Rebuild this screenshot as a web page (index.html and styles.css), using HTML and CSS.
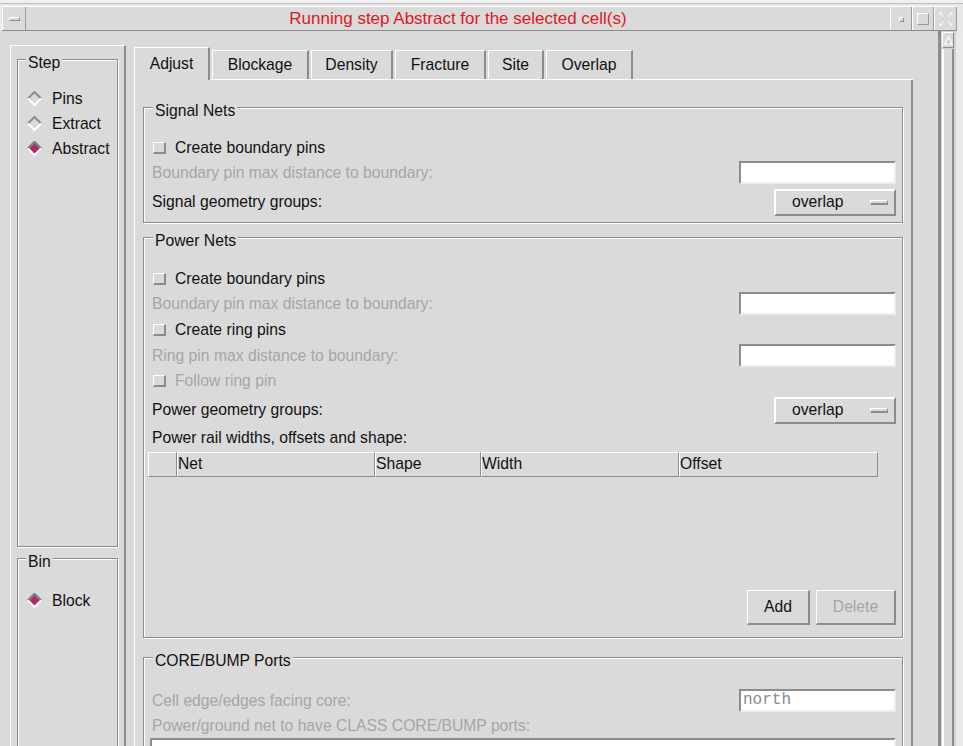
FILE: index.html
```html
<!DOCTYPE html>
<html>
<head>
<meta charset="utf-8">
<title>Abstract</title>
<link rel="stylesheet" href="styles.css">
</head>
<body>
<div class="window">
  <div class="topline"></div>
  <div class="titlebar">
    <div class="tb-btn tb-menu"><span class="menu-bar"></span></div>
    <div class="title">Running step Abstract for the selected cell(s)</div>
    <div class="tb-btn tb-min"><span class="min-dot"></span></div>
    <div class="tb-btn tb-max"><span class="max-box"></span></div>
    <div class="tb-btn tb-close">
      <svg width="14" height="14" viewBox="0 0 14 14">
        <g fill="none" stroke="#f6f6f6" stroke-width="1.4" stroke-dasharray="2 1">
          <path d="M1 1 L5 5 M13 1 L9 5 M1 13 L5 9 M13 13 L9 9"/>
          <path d="M1 1 H4 M1 1 V4 M13 1 H10 M13 1 V4 M1 13 H4 M1 13 V10 M13 13 H10 M13 13 V10"/>
        </g>
      </svg>
    </div>
  </div>
  <div class="client">
    <div class="scrollview">
      <div class="leftpanel">
        <div class="group step-group">
          <div class="group-title">Step</div>
          <div class="radio-list">
            <div class="radio-row">
              <svg class="radio" width="15" height="15" viewBox="0 0 15 15"><path d="M1 7.5 L7.5 1 L14 7.5" fill="none" stroke="#8a8a8a" stroke-width="2"/><path d="M1 7.5 L7.5 14 L14 7.5" fill="none" stroke="#ffffff" stroke-width="2"/></svg>
              <span>Pins</span>
            </div>
            <div class="radio-row">
              <svg class="radio" width="15" height="15" viewBox="0 0 15 15"><path d="M1 7.5 L7.5 1 L14 7.5" fill="none" stroke="#8a8a8a" stroke-width="2"/><path d="M1 7.5 L7.5 14 L14 7.5" fill="none" stroke="#ffffff" stroke-width="2"/></svg>
              <span>Extract</span>
            </div>
            <div class="radio-row">
              <svg class="radio" width="15" height="15" viewBox="0 0 15 15"><path d="M7.5 2 L13 7.5 L7.5 13 L2 7.5 Z" fill="#b02a68"/><path d="M1 7.5 L7.5 1 L14 7.5" fill="none" stroke="#7c7c7c" stroke-width="2.4"/><path d="M1 7.5 L7.5 14 L14 7.5" fill="none" stroke="#ffffff" stroke-width="2"/></svg>
              <span>Abstract</span>
            </div>
          </div>
        </div>
        <div class="group bin-group">
          <div class="group-title">Bin</div>
          <div class="radio-list bin-list">
            <div class="radio-row">
              <svg class="radio" width="15" height="15" viewBox="0 0 15 15"><path d="M7.5 2 L13 7.5 L7.5 13 L2 7.5 Z" fill="#b02a68"/><path d="M1 7.5 L7.5 1 L14 7.5" fill="none" stroke="#7c7c7c" stroke-width="2.4"/><path d="M1 7.5 L7.5 14 L14 7.5" fill="none" stroke="#ffffff" stroke-width="2"/></svg>
              <span>Block</span>
            </div>
          </div>
        </div>
      </div>

      <div class="tabs">
        <div class="tabrow">
          <div class="tab active w-adjust">Adjust</div>
          <div class="tab w-blockage">Blockage</div>
          <div class="tab w-density">Density</div>
          <div class="tab w-fracture">Fracture</div>
          <div class="tab w-site">Site</div>
          <div class="tab w-overlap">Overlap</div>
        </div>
        <div class="tabbody">
          <div class="group signal">
            <div class="group-title">Signal Nets</div>
            <div class="group-body">
              <div class="row first">
                <div class="check-label"><span class="checkbox"></span><span>Create boundary pins</span></div>
              </div>
              <div class="row">
                <span class="disabled">Boundary pin max distance to boundary:</span>
                <span class="input"></span>
              </div>
              <div class="row tall">
                <span>Signal geometry groups:</span>
                <span class="option"><span>overlap</span><span class="indicator"></span></span>
              </div>
            </div>
          </div>

          <div class="group power">
            <div class="group-title">Power Nets</div>
            <div class="group-body">
              <div class="row first">
                <div class="check-label"><span class="checkbox"></span><span>Create boundary pins</span></div>
              </div>
              <div class="row">
                <span class="disabled">Boundary pin max distance to boundary:</span>
                <span class="input"></span>
              </div>
              <div class="row gap1">
                <div class="check-label"><span class="checkbox"></span><span>Create ring pins</span></div>
              </div>
              <div class="row gap1">
                <span class="disabled">Ring pin max distance to boundary:</span>
                <span class="input"></span>
              </div>
              <div class="row">
                <div class="check-label disabled"><span class="checkbox"></span><span>Follow ring pin</span></div>
              </div>
              <div class="row tall">
                <span>Power geometry groups:</span>
                <span class="option"><span>overlap</span><span class="indicator"></span></span>
              </div>
              <div class="row gap1">
                <span>Power rail widths, offsets and shape:</span>
              </div>
              <div class="table-head">
                <div class="th"></div>
                <div class="th">Net</div>
                <div class="th">Shape</div>
                <div class="th">Width</div>
                <div class="th">Offset</div>
              </div>
              <div class="btn-row">
                <span class="btn w-add">Add</span>
                <span class="btn w-delete disabled">Delete</span>
              </div>
            </div>
          </div>

          <div class="group core">
            <div class="group-title">CORE/BUMP Ports</div>
            <div class="group-body">
              <div class="row first">
                <span class="disabled">Cell edge/edges facing core:</span>
                <span class="input mono">north</span>
              </div>
              <div class="row">
                <span class="disabled">Power/ground net to have CLASS CORE/BUMP ports:</span>
              </div>
              <div class="input wide"></div>
            </div>
          </div>
        </div>
      </div>
    </div>
    <div class="vscroll">
      <div class="sb-up">
        <svg width="9" height="9" viewBox="0 0 9 9"><path d="M4.5 1 L8 8 L1 8 Z" fill="#c9c9c9" stroke="#ffffff" stroke-width="1.2"/></svg>
      </div>
      <div class="sb-thumb"></div>
    </div>
    <div class="rightedge"></div>
  </div>
</div>
</body>
</html>
```
FILE: styles.css
```css
* { box-sizing: border-box; }
html, body { margin: 0; padding: 0; }
body {
  width: 963px;
  height: 746px;
  overflow: hidden;
  background: #e8e8e8;
  font-family: "Liberation Sans", Arial, sans-serif;
  font-size: 15.7px;
  color: #111;
}
.window { width: 963px; height: 746px; display: flex; flex-direction: column; }

.topline { height: 4px; background: #f0f0f0; border-bottom: 1px solid #bcbcbc; flex: none; }

.titlebar {
  flex: none;
  height: 25px;
  margin: 2px 6px 0 2px;
  display: flex;
  background: #dadada;
  border-top: 1px solid #fff;
  border-bottom: 1px solid #8c8c8c;
}
.tb-btn {
  flex: none;
  display: flex;
  align-items: center;
  justify-content: center;
  border-left: 1px solid #fff;
  border-right: 1px solid #9a9a9a;
}
.tb-menu { width: 24px; }
.menu-bar {
  width: 11px; height: 4px;
  border-top: 1px solid #fff; border-left: 1px solid #fff;
  border-right: 1px solid #8c8c8c; border-bottom: 1px solid #8c8c8c;
}
.title {
  flex: 1;
  text-align: center;
  color: #e0181e;
  font-size: 17px;
  line-height: 23px;
}
.tb-min { width: 22px; }
.min-dot {
  width: 5px; height: 5px; margin-top: 2px;
  border-top: 1px solid #fff; border-left: 1px solid #fff;
  border-right: 1px solid #8c8c8c; border-bottom: 1px solid #8c8c8c;
}
.tb-max { width: 22px; }
.max-box {
  width: 12px; height: 12px;
  border-top: 1px solid #fff; border-left: 1px solid #fff;
  border-right: 1px solid #9c9c9c; border-bottom: 1px solid #9c9c9c;
}
.tb-close { width: 23px; }

.client {
  flex: none;
  height: 715px;
  display: flex;
  background: #dadada;
  overflow: hidden;
}
.scrollview {
  width: 938px;
  flex: none;
  display: flex;
  align-items: flex-start;
  padding: 14px 0 0 10px;
  overflow: hidden;
}

.leftpanel {
  flex: none;
  width: 116px;
  height: 720px;
  border-top: 1px solid #fff;
  border-left: 1px solid #fff;
  border-right: 2px solid #8c8c8c;
  padding-left: 6px;
}

.group {
  border: 1px solid #8c8c8c;
  box-shadow: 1px 1px 0 #fff, inset 1px 1px 0 #fff;
}
.group-title {
  width: max-content;
  margin: -6px 0 0 9px;
  padding: 0 2px;
  background: #dadada;
  line-height: 18px;
}
.step-group { width: 101px; height: 488px; margin-top: 13px; }
.bin-group { width: 101px; height: 300px; margin-top: 11px; }
.step-group .group-title, .bin-group .group-title { margin-left: 8px; }
.radio-list { margin-top: 14px; }
.bin-list { margin-top: 17px; }
.radio-row {
  height: 25px;
  display: flex;
  align-items: center;
  gap: 10px;
  padding-left: 9px;
}
.radio { flex: none; display: block; }

.tabs { flex: none; width: 779px; margin: 2px 0 0 8px; }
.tabrow {
  height: 33px;
  display: flex;
  align-items: flex-end;
  gap: 2px;
  border-bottom: 1px solid #fff;
}
.tab {
  flex: none;
  height: 29px;
  display: flex;
  align-items: center;
  justify-content: center;
  border-top: 1px solid #fff;
  border-left: 1px solid #fff;
  border-right: 2px solid #8c8c8c;
  background: #dadada;
}
.tab.active { height: 33px; margin-bottom: -1px; padding-top: 0; }
.w-adjust { width: 76px; }
.w-blockage { width: 97px; }
.w-density { width: 82px; }
.w-fracture { width: 91px; }
.w-site { width: 56px; }
.w-overlap { width: 87px; }

.tabbody {
  height: 700px;
  border-left: 1px solid #fff;
  border-right: 2px solid #8c8c8c;
  padding: 27px 8px 0 8px;
}
.power { margin-top: 14px; }
.core { margin-top: 19px; height: 120px; }

.group-body { padding: 0 6px 0 8px; }
.signal .group-body { padding-bottom: 6px; }
.power .group-body { padding-bottom: 12px; }

.row {
  height: 25px;
  display: flex;
  align-items: center;
  justify-content: space-between;
  white-space: nowrap;
}
.signal .row.first { margin-top: 15px; }
.power .row.first { margin-top: 16px; }
.core .row.first { margin-top: 18px; }
.row.gap1 { margin-top: 1px; }
.row.tall { height: 28px; margin-top: 3px; }

.check-label { display: flex; align-items: center; gap: 9px; }
.checkbox {
  flex: none;
  width: 13px; height: 12px;
  margin-left: 1px;
  border-top: 1px solid #fff;
  border-left: 1px solid #fff;
  border-right: 2px solid #8c8c8c;
  border-bottom: 2px solid #8c8c8c;
}
.disabled { color: #a6a6a6; }

.input {
  flex: none;
  display: block;
  width: 157px;
  height: 23px;
  background: #fff;
  border: 2px solid;
  border-color: #8c8c8c #eeeeee #eeeeee #8c8c8c;
}
.input.mono {
  font-family: "Liberation Mono", "DejaVu Sans Mono", monospace;
  font-size: 16px;
  line-height: 19px;
  color: #8c8c8c;
  padding-left: 2px;
}
.input.wide { width: 746px; margin-left: -2px; }

.option {
  flex: none;
  width: 122px;
  height: 27px;
  display: flex;
  align-items: center;
  justify-content: space-between;
  padding: 0 6px 0 16px;
  border: 2px solid;
  border-color: #fff #8c8c8c #8c8c8c #fff;
}
.indicator {
  width: 18px; height: 5px;
  border-top: 1px solid #fff; border-left: 1px solid #fff;
  border-right: 1px solid #8c8c8c; border-bottom: 2px solid #8c8c8c;
}

.table-head {
  display: grid;
  grid-template-columns: 29px 198px 106px 198px 199px;
  height: 25px;
  margin: 2px 0 0 -4px;
}
.th {
  border-top: 1px solid #fff;
  border-left: 1px solid #fff;
  border-right: 1px solid #8c8c8c;
  border-bottom: 1px solid #8c8c8c;
  line-height: 22px;
  padding-left: 0;
}

.btn-row {
  display: flex;
  justify-content: flex-end;
  gap: 6px;
  margin-top: 113px;
}
.btn {
  height: 35px;
  display: flex;
  align-items: center;
  justify-content: center;
  border-style: solid;
  border-width: 1px 2px 2px 1px;
  border-color: #fff #8c8c8c #8c8c8c #fff;
}
.w-add { width: 63px; }
.w-delete { width: 80px; }

.vscroll {
  flex: none;
  width: 18px;
  display: flex;
  flex-direction: column;
  border-left: 3px solid #8c8c8c;
  padding: 1px 2px 0 1px;
  background: #d2d2d2;
}
.sb-up {
  height: 16px;
  display: flex;
  align-items: center;
  justify-content: center;
  border: 1px solid;
  border-color: #fff #8c8c8c #8c8c8c #fff;
  background: #dadada;
}
.sb-thumb {
  flex: 1;
  margin-top: 1px;
  border-left: 2px solid #fff;
  border-right: 2px solid #8c8c8c;
  background: #dadada;
}
.rightedge { flex: none; width: 7px; background: #e9e9e9; }
```
